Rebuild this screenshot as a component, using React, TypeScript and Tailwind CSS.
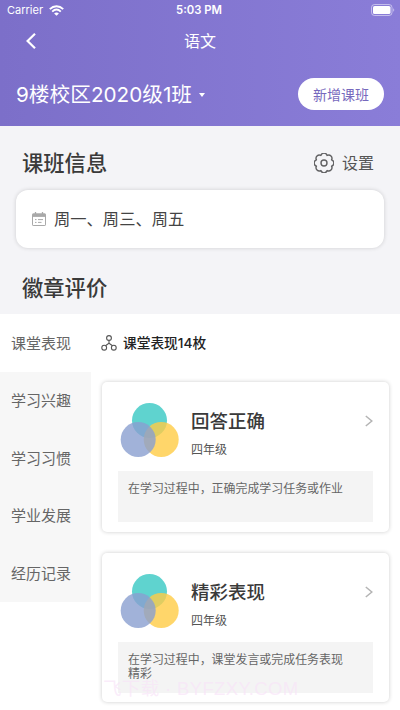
const tabs = ['课堂表现', '学习兴趣', '学习习惯', '学业发展', '经历记录']

const badges = [
  {
    title: '回答正确',
    grade: '四年级',
    description: '在学习过程中，正确完成学习任务或作业',
  },
  {
    title: '精彩表现',
    grade: '四年级',
    description: '在学习过程中，课堂发言或完成任务表现精彩',
  },
]

function WifiIcon() {
  return (
    <svg viewBox="0 0 15 11" className="h-[11px] w-[15px]" fill="none" stroke="white" strokeWidth="1.9">
      <path d="M0.8 4.1C4.7 0.3 10.3 0.3 14.2 4.1" />
      <path d="M3.2 6.6C5.8 4.2 9.2 4.2 11.8 6.6" />
      <path d="M7.5 10.8L5.1 8.4C6.5 7.2 8.5 7.2 9.9 8.4Z" fill="white" stroke="none" />
    </svg>
  )
}

function BatteryIcon() {
  return (
    <svg viewBox="0 0 24 12" className="h-3 w-6" fill="none">
      <rect x="0.5" y="0.5" width="20.5" height="11" rx="3" stroke="white" strokeOpacity="0.5" />
      <rect x="2" y="2" width="17.5" height="8" rx="1.6" fill="white" />
      <path d="M22.2 4.2C23.6 4.8 23.6 7.2 22.2 7.8Z" fill="white" fillOpacity="0.5" />
    </svg>
  )
}

function BackIcon() {
  return (
    <svg viewBox="0 0 10 16" className="h-4 w-2.5" fill="none" stroke="white" strokeWidth="2.2">
      <path d="M9 0.8L1.6 8L9 15.2" />
    </svg>
  )
}

function ArrowIcon() {
  return (
    <svg viewBox="0 0 8 12" className="h-3 w-2" fill="none" stroke="#b4b4b4" strokeWidth="1.5">
      <path d="M0.8 1L6.8 6L0.8 11" />
    </svg>
  )
}

function GearIcon() {
  return (
    <svg viewBox="0 0 20 20" className="h-5 w-5" fill="none" stroke="#606062" strokeWidth="1.4" strokeLinejoin="round">
      <path d="M6.86 2.42A3.3 3.3 0 0 1 13.14 2.42A3.3 3.3 0 0 1 17.58 6.86A3.3 3.3 0 0 1 17.58 13.14A3.3 3.3 0 0 1 13.14 17.58A3.3 3.3 0 0 1 6.86 17.58A3.3 3.3 0 0 1 2.42 13.14A3.3 3.3 0 0 1 2.42 6.86A3.3 3.3 0 0 1 6.86 2.42Z" />
      <circle cx="10" cy="10" r="3" />
    </svg>
  )
}

function CalendarIcon() {
  return (
    <svg viewBox="0 0 14 14" className="h-3.5 w-3.5" fill="none" stroke="#a9a9a9">
      <rect x="0.5" y="1.8" width="13" height="11.7" rx="0.6" />
      <path d="M0.5 3.4H13.5" strokeWidth="3" />
      <path d="M3.5 0V4M10.5 0V4" strokeWidth="1.3" />
      <path d="M3 7.6H4.5M6 7.6H11M3 10.4H4.5M6 10.4H9.5" />
    </svg>
  )
}

function ClusterIcon() {
  return (
    <svg viewBox="0 0 16 16" className="h-4 w-4" fill="none" stroke="#555555" strokeWidth="1.1">
      <circle cx="8" cy="3" r="2.4" />
      <circle cx="3.2" cy="12.7" r="2.4" />
      <circle cx="12.8" cy="12.7" r="2.4" />
      <path d="M8 5.4V8.3L4.5 10.7M8 8.3L11.5 10.7" />
    </svg>
  )
}

function BadgeCircles() {
  return (
    <svg viewBox="0 0 60 56" className="h-14 w-[60px]">
      <circle cx="29.5" cy="17.5" r="17.5" fill="#5fd3cf" />
      <circle cx="41.2" cy="36.5" r="17.5" fill="#ffcc45" fillOpacity="0.8" />
      <circle cx="18.2" cy="36.5" r="17.5" fill="#8a9fcf" fillOpacity="0.8" />
    </svg>
  )
}

export default function App() {
  return (
    <div className="relative flex h-[710px] w-[400px] flex-col overflow-hidden bg-white font-['Inter','Noto_Sans_CJK_SC',sans-serif] text-[#3a3a3a]">
      <header className="h-[126px] shrink-0 bg-linear-to-r from-[#7c6fc9] to-[#8a7dd8] text-white">
        <div className="grid h-5 grid-cols-3 items-center pr-[5px] pl-[7px] text-[11px]">
          <div className="flex items-center gap-1.5">
            <span>Carrier</span>
            <WifiIcon />
          </div>
          <span className="-ml-1 text-center text-[11.3px] font-semibold">5:03 PM</span>
          <div className="flex justify-end">
            <BatteryIcon />
          </div>
        </div>
        <div className="grid h-[42px] grid-cols-3 items-center px-[26px]">
          <BackIcon />
          <h1 className="text-center text-[16px]">语文</h1>
        </div>
        <div className="flex h-16 items-center justify-between px-4">
          <div className="flex items-center gap-[7px] pt-0.5">
            <span className="text-[20.7px]">9楼校区2020级1班</span>
            <span className="border-x-[3px] border-t-[4px] border-x-transparent border-t-white" />
          </div>
          <button className="h-8 w-[86px] rounded-full bg-white text-[14px] text-[#7769bd]">
            新增课班
          </button>
        </div>
      </header>

      <section className="h-[188px] shrink-0 bg-[#f4f4f7] px-4">
        <div className="flex h-16 items-center justify-between pt-3 pr-2.5 pl-1.5">
          <h2 className="text-[21.3px] font-medium">课班信息</h2>
          <div className="-mt-0.5 flex items-center gap-2 text-[16px] text-[#555555]">
            <GearIcon />
            <span>设置</span>
          </div>
        </div>
        <div className="flex h-[58px] items-center gap-2 rounded-xl bg-white pl-4 text-[16.3px] text-[#444444] shadow-[0_0_4px_rgba(0,0,0,0.16)]">
          <CalendarIcon />
          <span>周一、周三、周五</span>
        </div>
        <div className="flex h-[66px] items-center pt-[15px] pl-1.5">
          <h2 className="text-[21.3px] font-medium">徽章评价</h2>
        </div>
      </section>

      <div className="flex flex-1">
        <nav className="w-[91px] shrink-0 text-[15px] text-[#666666]">
          {tabs.map((tab, index) => (
            <div
              key={tab}
              className={`flex h-[57.5px] items-center pt-0.5 pl-[11px] ${index === 0 ? 'bg-white' : 'bg-[#f7f7f7]'}`}
            >
              {tab}
            </div>
          ))}
        </nav>

        <main className="flex-1 px-[11px]">
          <div className="flex h-[68px] items-start pt-[19px]">
            <div className="-ml-px flex h-5 items-center gap-1.5">
              <ClusterIcon />
              <span className="text-[13.7px] font-medium text-[#222222]">课堂表现14枚</span>
            </div>
          </div>
          <div className="space-y-[21px]">
            {badges.map(({ title, grade, description }) => (
              <article
                key={title}
                className="h-[149.5px] rounded-[5px] bg-white px-4 shadow-[0_0_4px_rgba(0,0,0,0.2)]"
              >
                <div className="flex h-[89px] pt-[21px] pl-0.5">
                  <BadgeCircles />
                  <div className="ml-[11px] pt-[3px]">
                    <h3 className="text-[18.5px] leading-[30px] font-medium">{title}</h3>
                    <p className="mt-1 text-[12px] leading-[20px] text-[#555555]">{grade}</p>
                  </div>
                  <div className="mt-3 ml-auto">
                    <ArrowIcon />
                  </div>
                </div>
                <p className="h-[51px] bg-[#f4f4f4] pt-[11px] pr-7 pl-2.5 text-[11.95px] leading-[14px] text-[#666666]">
                  {description}
                </p>
              </article>
            ))}
          </div>
        </main>
      </div>

      <div className="absolute top-[682px] left-[103px] font-['Liberation_Sans','Noto_Sans_CJK_SC',sans-serif] text-[18.5px] leading-[14px] tracking-[0.35px] whitespace-nowrap text-[#f8e4f8]/70">
        飞下载 · BYFZXY.COM
      </div>
    </div>
  )
}
